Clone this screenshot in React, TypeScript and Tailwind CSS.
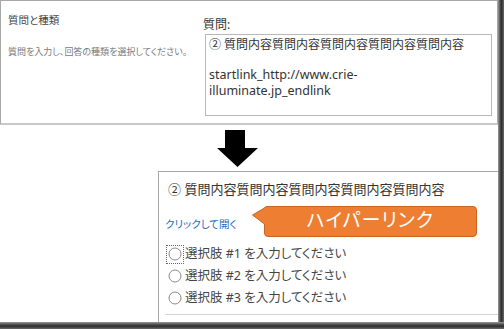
const font = "font-['Noto_Sans','Noto_Sans_CJK_JP',sans-serif] [font-feature-settings:'palt']";

const Radio = ({ label, focused }: { label: string; focused?: boolean }) => (
  <div className="flex h-[22px] items-center">
    <div
      className={
        focused
          ? "flex h-[19px] w-[18px] -ml-[2px] items-center justify-center border border-dotted border-[#666]"
          : "flex h-[19px] w-[18px] -ml-[2px] items-center justify-center"
      }
    >
      <svg width="14" height="14" viewBox="0 0 14 14">
        <circle cx="7" cy="7" r="6" fill="#fff" stroke="#8a8a8a" strokeWidth="1" />
      </svg>
    </div>
    <span className="ml-[1px] text-[12.5px] leading-[22px] text-[#444]">{label}</span>
  </div>
);

const Callout = () => (
  <div className="relative h-[31px] w-[226px]">
    <svg className="absolute inset-0" width="226" height="31" viewBox="0 0 226 31">
      <path
        d="M0.5 9 L12.5 2 Q12.5 0.5 16 0.5 L221 0.5 Q224.5 0.5 224.5 4 L224.5 27 Q224.5 30.5 221 30.5 L16 30.5 Q12.5 30.5 12.5 27 L12.5 18 Z"
        fill="#ee7e32"
        stroke="#c9651f"
        strokeWidth="1"
      />
    </svg>
    <div className="relative ml-[12px] flex h-[28px] w-[213px] items-center justify-center text-[19px] tracking-[1px] text-white">
      ハイパーリンク
    </div>
  </div>
);

export default function App() {
  return (
    <div className={`flex h-[329px] w-[504px] flex-col bg-white ${font}`}>
      <div className="flex flex-1">
        <div className="flex w-[498px] flex-col">
          {/* 上のスクリーンショット */}
          <div className="flex h-[125px] border-t border-r border-l border-[#a8a8a8] border-b-2 border-b-[#c8c8c8]">
            <div className="w-[196px] pt-[11px] pl-[7px]">
              <div className="text-[10.5px] leading-[16px] text-[#444]">質問と種類</div>
              <div className="mt-[17px] text-[9px] leading-[14px] text-[#7a7a7a]">
                質問を入力し、回答の種類を選択してください。
              </div>
            </div>
            <div className="flex-1 pt-[16px]">
              <div className="pl-[6px] text-[12px] leading-[16px] text-[#333]">質問:</div>
              <div className="mt-[1px] ml-[8px] h-[82px] w-[287px] border border-[#b8b8b8] pt-[2px] pl-[3px] text-[12px] leading-[16px] text-[#333]">
                <div>② 質問内容質問内容質問内容質問内容質問内容</div>
                <div className="h-[14px]" />
                <div className="text-[12.5px]">startlink_http://www.crie-</div>
                <div className="text-[12.5px]">illuminate.jp_endlink</div>
              </div>
            </div>
          </div>

          {/* 矢印 */}
          <div className="h-[46px] pl-[217px]">
            <svg width="42" height="46" viewBox="0 0 42 46">
              <path d="M8 5 H28 V23 H41 L20.5 42 L0 23 H8 Z" fill="#000" />
            </svg>
          </div>

          {/* 下のスクリーンショット */}
          <div className="ml-[158px] flex-1 border-t border-l border-[#a8a8a8] pt-[8px] pl-[9px]">
            <div className="text-[13px] leading-[18px] text-[#333]">② 質問内容質問内容質問内容質問内容質問内容</div>
            <div className="mt-[8px] flex items-start">
              <span className="-ml-[3px] mt-[10px] text-[10.5px] leading-[16px] text-[#1e6fbf]">クリックして開く</span>
              <div className="ml-[15px]">
                <Callout />
              </div>
            </div>
            <div className="mt-[6px]">
              <Radio label="選択肢 #1 を入力してください" focused />
              <Radio label="選択肢 #2 を入力してください" />
              <Radio label="選択肢 #3 を入力してください" />
            </div>
            <div className="mt-[5px] -ml-[3px] border-t border-[#d4d4d4]" />
          </div>
        </div>
        <div className="w-[6px] bg-[linear-gradient(to_right,#9a9a9a,#505050_35%,#2e2e2e_60%,#6a6a6a)]" />
      </div>
      <div className="h-[7px] bg-[linear-gradient(to_bottom,#9a9a9a,#505050_35%,#2e2e2e_60%,#6a6a6a)]" />
    </div>
  );
}
